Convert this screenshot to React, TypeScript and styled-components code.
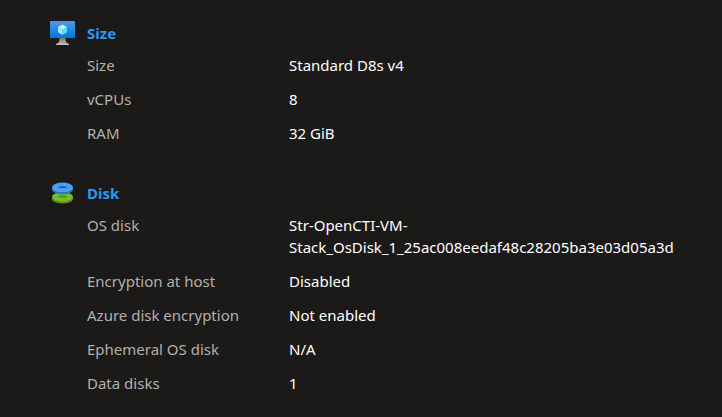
import React from "react";
import styled, { createGlobalStyle } from "styled-components";

const GlobalStyle = createGlobalStyle`
  body {
    margin: 0;
    background: #1b1a19;
    color: #ffffff;
    font-family: "Segoe UI", "Noto Sans", sans-serif;
    font-size: 15px;
    line-height: 22px;
  }
`;

const Page = styled.main`
  display: flex;
  flex-direction: column;
  gap: 38px;
  padding: 22px 24px 20px 50px;
`;

const Section = styled.section`
  display: grid;
  grid-template-columns: 25px minmax(0, 1fr);
  column-gap: 12px;
  row-gap: 10px;
`;

const IconBox = styled.span`
  display: flex;
  align-items: center;
  justify-content: center;
  height: 22px;

  svg {
    flex: none;
    display: block;
  }
`;

const Heading = styled.h2`
  margin: 0;
  font-size: 15px;
  font-weight: 700;
  line-height: 22px;
  color: #2899f5;
`;

const Details = styled.dl`
  grid-column: 2;
  display: flex;
  flex-direction: column;
  gap: 12px;
  margin: 0;
`;

const Row = styled.div`
  display: grid;
  grid-template-columns: 202px minmax(0, 1fr);
`;

const Label = styled.dt`
  color: #b3b0ad;
`;

const Value = styled.dd`
  margin: 0;
  overflow-wrap: break-word;
`;

const MonitorIcon = () => (
  <svg width="25" height="24" viewBox="0 0 25 24" aria-hidden="true">
    <defs>
      <linearGradient id="screen" x1="0" y1="1" x2="0" y2="0">
        <stop offset="0" stopColor="#0078d4" />
        <stop offset="1" stopColor="#5099ec" />
      </linearGradient>
      <linearGradient id="stand" x1="0" y1="1" x2="0" y2="0">
        <stop offset="0" stopColor="#c4c4c4" />
        <stop offset="1" stopColor="#707070" />
      </linearGradient>
    </defs>
    <path d="M9.500 16.500h6c0 4 .3 5.300 3.500 6.300V24H6v-1.200c3.200-1 3.500-2.300 3.500-6.300z" fill="url(#stand)" />
    <rect x="0" y="0" width="25" height="17" rx="0.800" fill="url(#screen)" />
    <path d="M12.500 3.500l4.500 2.600-4.500 2.600L8 6.100z" fill="#c3f1ff" />
    <path d="M8 6.100l4.500 2.600v5.200L8 11.300z" fill="#9cebff" />
    <path d="M17 6.100l-4.500 2.600v5.200l4.500-2.600z" fill="#50e6ff" />
  </svg>
);

const DisksIcon = () => (
  <svg width="25" height="24" viewBox="0 0 25 24" aria-hidden="true">
    <path d="M2 15.500v2.300c0 2.700 4.700 4.700 10.500 4.700S23 20.500 23 17.800v-2.300z" fill="#5e9624" />
    <ellipse cx="12.500" cy="15.800" rx="10.500" ry="4.600" fill="#76bc2d" />
    <ellipse cx="12.500" cy="15.500" rx="4.500" ry="1.500" fill="#5e9624" />
    <path d="M2 6.200v2.300c0 2.700 4.700 4.700 10.500 4.700S23 11.200 23 8.500V6.200z" fill="#1476d2" />
    <ellipse cx="12.500" cy="6.500" rx="10.500" ry="4.900" fill="#4b9cf2" />
    <ellipse cx="12.500" cy="6.400" rx="4.500" ry="1.500" fill="#1764b8" />
    <path d="M8.700 7.100c1.800 1 5.800 1 7.600 0" fill="none" stroke="#83b9f9" strokeWidth="0.700" />
  </svg>
);

type Group = { title: string; icon: React.ReactNode; items: [string, string][] };

const groups: Group[] = [
  {
    title: "Size",
    icon: <MonitorIcon />,
    items: [
      ["Size", "Standard D8s v4"],
      ["vCPUs", "8"],
      ["RAM", "32 GiB"],
    ],
  },
  {
    title: "Disk",
    icon: <DisksIcon />,
    items: [
      ["OS disk", "Str-OpenCTI-VM-Stack_OsDisk_1_25ac008eedaf48c28205ba3e03d05a3d"],
      ["Encryption at host", "Disabled"],
      ["Azure disk encryption", "Not enabled"],
      ["Ephemeral OS disk", "N/A"],
      ["Data disks", "1"],
    ],
  },
];

export default function App() {
  return (
    <>
      <GlobalStyle />
      <Page>
        {groups.map((group) => (
          <Section key={group.title}>
            <IconBox>{group.icon}</IconBox>
            <Heading>{group.title}</Heading>
            <Details>
              {group.items.map(([label, value]) => (
                <Row key={label}>
                  <Label>{label}</Label>
                  <Value>{value}</Value>
                </Row>
              ))}
            </Details>
          </Section>
        ))}
      </Page>
    </>
  );
}
